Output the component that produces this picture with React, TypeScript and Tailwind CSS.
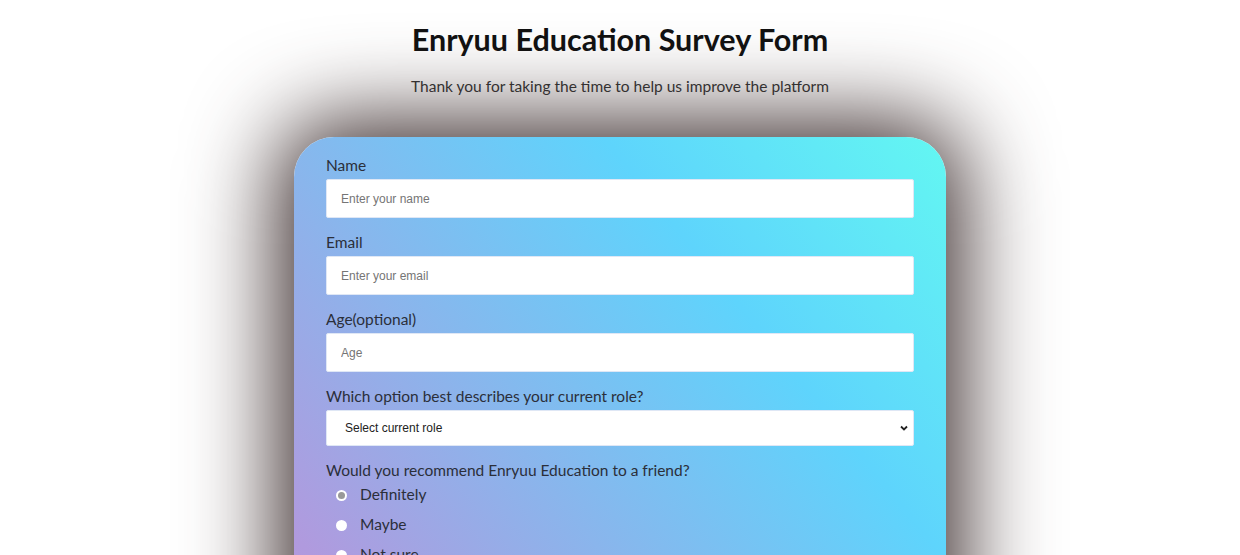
import React from "react";

const font = { fontFamily: "Lato, 'Noto Sans', sans-serif" };

function Field({ label, placeholder, type = "text" }: { label: string; placeholder: string; type?: string }) {
  return (
    <div className="flex flex-col">
      <label className="text-[15.5px] leading-[20px] text-[#2b2f3a]">{label}</label>
      <input
        type={type}
        placeholder={placeholder}
        className="mt-[4px] h-[39px] w-full rounded-[2px] border border-[#dfe7f5] bg-white px-[14px] text-[12px] text-[#222] placeholder:text-[#757575] outline-none"
        style={{ fontFamily: "'Liberation Sans', Arial, sans-serif" }}
      />
    </div>
  );
}

function Radio({ label, checked }: { label: string; checked?: boolean }) {
  return (
    <label className="flex h-[30px] items-center pl-[10px] text-[15.5px] text-[#2b2f3a]">
      <span className="flex h-[11px] w-[11px] items-center justify-center rounded-full bg-white">
        {checked && <span className="h-[7px] w-[7px] rounded-full bg-[#999]" />}
      </span>
      <span className="ml-[13px]">{label}</span>
    </label>
  );
}

function Check({ label }: { label: string }) {
  return (
    <label className="flex h-[30px] items-center pl-[10px] text-[15.5px] text-[#2b2f3a]">
      <span className="h-[12px] w-[12px] rounded-[2px] bg-white" />
      <span className="ml-[13px]">{label}</span>
    </label>
  );
}

export default function App() {
  return (
    <div className="min-h-screen w-full bg-white pb-20" style={font}>
      <div className="flex flex-col items-center">
        <h1 className="mt-[19px] text-[30.5px] font-bold leading-[40px] text-[#111]">Enryuu Education Survey Form</h1>
        <p className="mt-[17px] text-[15.5px] leading-[20px] text-[#333]">
          Thank you for taking the time to help us improve the platform
        </p>
        <form className="mt-[41px] w-[652px] rounded-[40px] bg-[linear-gradient(231deg,#63f7f2_0px,#5ed4fc_267px,#b09ade_756px,#cf8fd6_1150px)] px-[32px] pb-[40px] pt-[18px] shadow-[0_0_90px_16px_rgba(60,45,45,1)]">
          <div className="flex flex-col gap-[14px]">
            <Field label="Name" placeholder="Enter your name" />
            <Field label="Email" placeholder="Enter your email" type="email" />
            <Field label="Age(optional)" placeholder="Age" type="number" />
            <div className="flex flex-col">
              <label className="text-[15.5px] leading-[20px] text-[#2b2f3a]">Which option best describes your current role?</label>
              <div className="relative mt-[4px] h-[36px] w-full rounded-[2px] border border-[#dfe7f5] bg-white">
                <span
                  className="absolute left-[18px] top-1/2 -translate-y-1/2 text-[12px] text-[#222]"
                  style={{ fontFamily: "'Liberation Sans', Arial, sans-serif" }}
                >
                  Select current role
                </span>
                <svg className="absolute right-[4px] top-1/2 -translate-y-1/2" width="10" height="10" viewBox="0 0 10 10">
                  <path d="M2 3.5 L5 6.5 L8 3.5" fill="none" stroke="#222" strokeWidth="1.8" />
                </svg>
              </div>
            </div>
            <div className="flex flex-col">
              <label className="text-[15.5px] leading-[20px] text-[#2b2f3a]">Would you recommend Enryuu Education to a friend?</label>
              <Radio label="Definitely" checked />
              <Radio label="Maybe" />
              <Radio label="Not sure" />
            </div>
            <div className="flex flex-col">
              <label className="text-[15.5px] leading-[20px] text-[#2b2f3a]">What would you like to see improved?</label>
              <Check label="Front-end Projects" />
              <Check label="Back-end Projects" />
              <Check label="Data Visualization" />
              <Check label="Challenges" />
              <Check label="Open Source Community" />
            </div>
            <div className="flex flex-col">
              <label className="text-[15.5px] leading-[20px] text-[#2b2f3a]">Any comments or suggestions?</label>
              <textarea
                placeholder="Enter your comment here..."
                className="mt-[4px] h-[120px] w-full rounded-[2px] bg-white px-[14px] py-[10px] text-[12px] outline-none"
              />
            </div>
            <button type="button" className="h-[40px] w-full rounded-[2px] bg-[#37af65] text-[15px] text-white">
              Submit
            </button>
          </div>
        </form>
      </div>
    </div>
  );
}
